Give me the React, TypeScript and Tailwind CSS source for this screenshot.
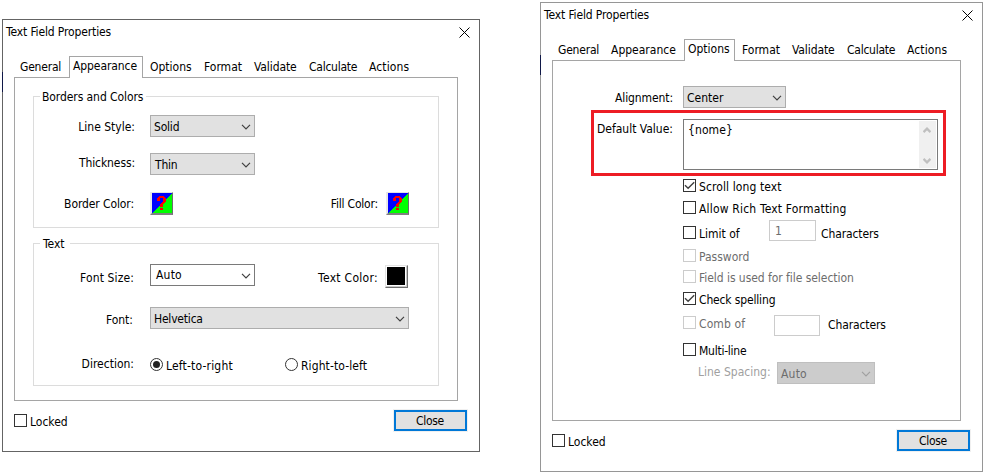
import type { ReactNode } from 'react';
import clsx from 'clsx';

function Chevron({ className }: { className?: string }) {
  return (
    <svg width="10" height="6" viewBox="0 0 10 6" className={clsx('shrink-0', className)}>
      <path d="M1 .8 5 4.8 9 .8" fill="none" stroke="currentColor" strokeWidth="1.2" />
    </svg>
  );
}

function Label({ children, className }: { children: ReactNode; className?: string }) {
  return <span className={clsx('block shrink-0 whitespace-nowrap', className)}>{children}</span>;
}

function Select({ value, className, text, arrow }: { value: string; className: string; text?: string; arrow?: string }) {
  return (
    <div className={clsx('flex h-[22px] shrink-0 items-start justify-between border pr-[3px]', className)}>
      <Label className={text ?? 'mt-[4px] pl-[3px]'}>{value}</Label>
      <Chevron className={clsx('mt-[8px]', arrow ?? 'text-[#404040]')} />
    </div>
  );
}

function Check({ label, checked, disabled, className, text }: { label: string; checked?: boolean; disabled?: boolean; className?: string; text?: string }) {
  return (
    <div className={clsx('flex h-[13px] shrink-0 items-start', disabled && 'text-[#6d6d6d]', className)}>
      <span className={clsx('block size-[13px] shrink-0 border', disabled ? 'border-[#cccccc]' : 'border-[#333333]')}>
        {checked && (
          <svg width="11" height="11" viewBox="0 0 11 11" className="block">
            <path d="M1 5.2 4.1 8.3 10.2 2.2" fill="none" stroke="#404040" strokeWidth="1.4" />
          </svg>
        )}
      </span>
      <Label className={clsx('mt-px ml-[3px]', text)}>{label}</Label>
    </div>
  );
}

function Radio({ label, selected, text }: { label: string; selected?: boolean; text?: string }) {
  return (
    <div className="flex h-[13px] shrink-0 items-start">
      <span className="flex size-[13px] shrink-0 items-center justify-center rounded-full border border-[#333]">
        {selected && <span className="block size-[7px] rounded-full bg-[#222]" />}
      </span>
      <Label className={clsx('mt-px ml-[3px]', text)}>{label}</Label>
    </div>
  );
}

function NoColor() {
  return (
    <div className="size-[23px] shrink-0 border-t border-r border-b-2 border-l-2 border-t-[#e3e3e3] border-r-[#6d6d6d] border-b-[#808080] border-l-[#e8e8e8]">
      <svg width="20" height="20" viewBox="0 0 20 20" className="block" shapeRendering="crispEdges">
        <path d="M0 0h20v20H0z" fill="#00f" />
        <path d="M20 0v20H0z" fill="#0f0" />
        <path
          d="M7 3h5v2H7zM6 4h2v1H6zM11 4h2v1h-2zM5 5h3v3H5zM11 5h3v4h-3zM10 9h3v1h-3zM9 10h3v1H9zM8 11h3v3H8zM8 15h3v2H8z"
          fill="#f00"
        />
      </svg>
    </div>
  );
}

function CloseButton() {
  return (
    <div className="flex h-[21px] w-[73px] shrink-0 items-start justify-center border-2 border-[#0078d7] bg-[#e1e1e1] pt-[2px] pr-px outline outline-[#f0f0f0]">
      <Label className="tracking-[-0.3px]">Close</Label>
    </div>
  );
}

function TitleBar() {
  return (
    <div className="flex h-[36px] shrink-0 items-start justify-between pt-[5px] pr-[9px] pl-[3px]">
      <Label className="tracking-[-0.13px]">Text Field Properties</Label>
      <svg width="11" height="11" viewBox="0 0 11 11" className="mt-[2px]">
        <path d="M.5.5l10 10M10.5.5l-10 10" fill="none" stroke="#000" strokeWidth="1" />
      </svg>
    </div>
  );
}

function Tab({ children, active, className }: { children: string; active?: boolean; className: string }) {
  return active ? (
    <div className={clsx('z-10 h-[22px] shrink-0 border border-b-0 border-[#a5a5a5] bg-white pt-[2px] pl-[3px]', className)}>
      <Label>{children}</Label>
    </div>
  ) : (
    <Label className={clsx('mt-[4px]', className)}>{children}</Label>
  );
}

function Group({ title, className, legend, children }: { title: string; className: string; legend: string; children: ReactNode }) {
  return (
    <div className={clsx('w-[406px] shrink-0 border border-[#dcdcdc]', className)}>
      <div className={clsx('-mt-[7px] ml-[6px] h-[14px] bg-white pl-[2px]', legend)}>
        <Label>{title}</Label>
      </div>
      {children}
    </div>
  );
}

function AppearanceDialog() {
  return (
    <div className="relative mt-[19px] flex h-[433px] w-[478px] shrink-0 flex-col border border-[#646464] bg-white">
      <span className="absolute top-[52px] -left-px h-[20px] w-px bg-[#101848]" />
      <TitleBar />
      <div className="flex h-[21px] shrink-0 items-start pl-[17px]">
        <Tab className="w-[49px] tracking-[-0.2px]">General</Tab>
        <Tab active className="w-[74px] tracking-[-0.08px]">Appearance</Tab>
        <Tab className="ml-[7px] w-[54px]">Options</Tab>
        <Tab className="w-[50px]">Format</Tab>
        <Tab className="w-[55px] tracking-[-0.1px]">Validate</Tab>
        <Tab className="w-[60px] tracking-[-0.25px]">Calculate</Tab>
        <Tab className="tracking-[0.1px]">Actions</Tab>
      </div>
      <div className="ml-[11px] flex h-[324px] w-[444px] shrink-0 flex-col border border-[#a5a5a5] pt-[18px] pl-[18px]">
        <Group title="Borders and Colors" className="h-[132px]" legend="w-[106px] tracking-[-0.08px]">
          <div className="mt-[11px] flex h-[22px] items-start">
            <Label className="mt-[5px] w-[101px] text-right">Line Style:</Label>
            <Select value="Solid" className="ml-[15px] w-[105px] border-[#adadad] bg-[#e1e1e1] tracking-[-0.2px]" />
          </div>
          <div className="mt-[15px] flex h-[24px] items-start">
            <Label className="mt-[4px] w-[101px] text-right tracking-[-0.1px]">Thickness:</Label>
            <Select value="Thin" className="mt-px ml-[15px] w-[105px] border-[#adadad] bg-[#e1e1e1]" text="mt-[4px] pl-[4px] tracking-[-0.2px]" />
          </div>
          <div className="mt-[16px] flex h-[23px] items-start">
            <Label className="mt-[5px] w-[101px] pr-px text-right tracking-[-0.1px]">Border Color:</Label>
            <div className="ml-[15px]"><NoColor /></div>
            <Label className="mt-[5px] w-[206px] pr-px text-right tracking-[-0.2px]">Fill Color:</Label>
            <div className="ml-[7px]"><NoColor /></div>
          </div>
        </Group>
        <Group title="Text" className="mt-[15px] h-[143px]" legend="w-[30px] pl-[3px]">
          <div className="mt-[13px] flex h-[24px] items-start">
            <Label className="mt-[7px] w-[100px] text-right tracking-[0.12px]">Font Size:</Label>
            <Select value="Auto" className="ml-[16px] w-[105px] border-[#7a7a7a] bg-white" text="mt-[3px] pl-[5px] tracking-[0.2px]" />
            <Label className="mt-[7px] w-[123px] text-right tracking-[0.3px]">Text Color:</Label>
            <div className="mt-px ml-[7px] size-[23px] border border-t-[#e3e3e3] border-r-[#6d6d6d] border-b-[#6d6d6d] border-l-[#e3e3e3] bg-[#c8c8c8]">
              <div className="size-[20px] bg-white p-px">
                <div className="size-[18px] bg-black" />
              </div>
            </div>
          </div>
          <div className="mt-[19px] flex h-[22px] items-start">
            <Label className="mt-[6px] w-[100px] pr-px text-right">Font:</Label>
            <Select value="Helvetica" className="ml-[16px] w-[259px] border-[#adadad] bg-[#e1e1e1] tracking-[-0.2px]" />
          </div>
          <div className="mt-[28px] flex h-[14px] items-start">
            <Label className="w-[100px] text-right">Direction:</Label>
            <div className="mt-px ml-[16px] flex w-[135px]"><Radio label="Left-to-right" selected text="tracking-[0.18px]" /></div>
            <div className="mt-px"><Radio label="Right-to-left" text="tracking-[0.1px]" /></div>
          </div>
        </Group>
      </div>
      <div className="mt-[9px] flex items-start justify-between pr-[12px] pl-[11px]">
        <Check label="Locked" className="mt-[4px]" />
        <CloseButton />
      </div>
    </div>
  );
}

function OptionsDialog() {
  return (
    <div className="relative mt-[2px] flex h-[470px] w-[443px] shrink-0 flex-col border border-[#969696] bg-white">
      <span className="absolute top-[52px] -left-px h-[20px] w-px bg-[#101848]" />
      <TitleBar />
      <div className="flex h-[21px] shrink-0 items-start pl-[17px]">
        <Tab className="w-[53px] tracking-[-0.2px]">General</Tab>
        <Tab className="w-[73px]">Appearance</Tab>
        <Tab active className="w-[51px]">Options</Tab>
        <Tab className="ml-[7px] w-[50px]">Format</Tab>
        <Tab className="w-[55px] tracking-[-0.1px]">Validate</Tab>
        <Tab className="w-[60px] tracking-[-0.25px]">Calculate</Tab>
        <Tab className="tracking-[0.1px]">Actions</Tab>
      </div>
      <div className="ml-[11px] flex h-[361px] w-[409px] shrink-0 flex-col items-start border border-[#a5a5a5] pt-[25px]">
        <div className="flex h-[22px] items-start">
          <Label className="mt-[5px] w-[120px] text-right tracking-[-0.1px]">Alignment:</Label>
          <Select value="Center" className="ml-[10px] w-[103px] border-[#adadad] bg-[#e1e1e1]" />
        </div>
        <div className="mt-[2px] ml-[38px] flex h-[66px] w-[355px] items-start border-3 border-[#ed1c24] pt-[6px]">
          <Label className="mt-[3px] w-[79px] text-right">Default Value:</Label>
          <div className="ml-[10px] flex h-[51px] w-[255px] items-start justify-between border border-[#7a7a7a] p-px">
            <Label className="mt-[2px] ml-[3px] tracking-[0.1px]">{'{nome}'}</Label>
            <div className="flex h-[47px] w-[17px] flex-col items-center justify-between bg-[#f0f0f0] pt-[6px] pr-px pb-[4px] text-[#bfbfbf]">
              <svg width="8" height="6" viewBox="0 0 8 6"><path d="M.5 5.1 4 1.6 7.5 5.1" fill="none" stroke="currentColor" strokeWidth="2.3" /></svg>
              <svg width="8" height="6" viewBox="0 0 8 6"><path d="M.5.9 4 4.4 7.5.9" fill="none" stroke="currentColor" strokeWidth="2.3" /></svg>
            </div>
          </div>
        </div>
        <div className="mt-[3px] ml-[130px] flex flex-col">
          <Check label="Scroll long text" checked text="tracking-[0.1px]" />
          <Check label="Allow Rich Text Formatting" className="mt-[9px]" text="tracking-[0.18px]" />
          <div className="mt-[6px] flex h-[21px] items-start">
            <Check label="Limit of" className="mt-[6px] w-[86px]" />
            <div className="h-[21px] w-[47px] border border-[#cccccc] pt-[3px] pl-[5px] text-[#6d6d6d]">1</div>
            <Label className="mt-[7px] ml-[5px] tracking-[-0.12px]">Characters</Label>
          </div>
          <Check label="Password" disabled className="mt-[8px]" />
          <Check label="Field is used for file selection" disabled className="mt-[8px]" text="tracking-[-0.05px]" />
          <Check label="Check spelling" checked className="mt-[9px]" text="tracking-[-0.15px]" />
          <div className="mt-[10px] flex h-[21px] items-start">
            <Check label="Comb of" disabled className="mt-px w-[91px]" text="tracking-[0.1px]" />
            <div className="h-[21px] w-[46px] border border-[#cccccc]" />
            <Label className="mt-[3px] ml-[8px] tracking-[-0.12px]">Characters</Label>
          </div>
          <Check label="Multi-line" className="mt-[7px]" text="tracking-[-0.25px]" />
          <div className="mt-[6px] flex h-[22px] items-start">
            <Label className="mt-[3px] ml-[15px] w-[79px] text-[#a0a0a0]">Line Spacing:</Label>
            <Select
              value="Auto"
              className="w-[98px] border-[#bfbfbf] bg-[#cccccc]"
              text="mt-[4px] pl-[3px] tracking-[0.2px] text-[#6d6d6d]"
              arrow="text-[#a0a0a0]"
            />
          </div>
        </div>
      </div>
      <div className="mt-[9px] flex items-start justify-between pr-[12px] pl-[11px]">
        <Check label="Locked" className="mt-[4px]" />
        <CloseButton />
      </div>
    </div>
  );
}

export default function App() {
  return (
    <div className="flex h-[476px] w-[987px] items-start gap-[60px] overflow-hidden bg-white pl-[2px] font-['DejaVu_Sans_Condensed','DejaVu_Sans',sans-serif] text-[12px] leading-[14px] text-black">
      <AppearanceDialog />
      <OptionsDialog />
    </div>
  );
}
